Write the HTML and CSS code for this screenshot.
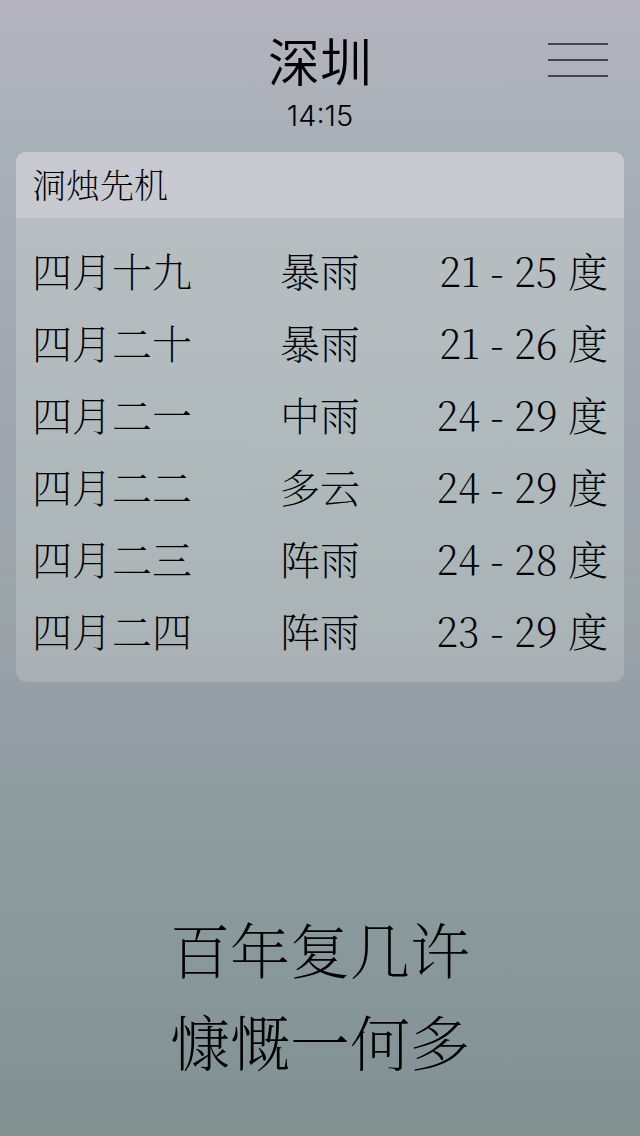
FILE: index.html
```html
<!DOCTYPE html>
<html lang="zh-CN">
<head>
<meta charset="utf-8">
<meta name="viewport" content="width=device-width, initial-scale=1">
<title>深圳</title>
<link rel="stylesheet" href="styles.css">
</head>
<body>
<header class="header">
  <div class="place">
    <h1 class="city">深圳</h1>
    <time class="time">14:15</time>
  </div>
  <button class="menu" type="button" aria-label="菜单">
    <svg class="menu-icon" viewBox="0 0 60 36" aria-hidden="true"><path d="M0 2H60M0 18H60M0 34H60"/></svg>
  </button>
</header>
<main class="main">
  <section class="card">
    <h2 class="card-title">洞烛先机</h2>
    <table class="forecast">
      <tbody>
        <tr><td>四月十九</td><td>暴雨</td><td>21 - 25 度</td></tr>
        <tr><td>四月二十</td><td>暴雨</td><td>21 - 26 度</td></tr>
        <tr><td>四月二一</td><td>中雨</td><td>24 - 29 度</td></tr>
        <tr><td>四月二二</td><td>多云</td><td>24 - 29 度</td></tr>
        <tr><td>四月二三</td><td>阵雨</td><td>24 - 28 度</td></tr>
        <tr><td>四月二四</td><td>阵雨</td><td>23 - 29 度</td></tr>
      </tbody>
    </table>
  </section>
</main>
<footer class="poem">
  <p>百年复几许</p>
  <p>慷慨一何多</p>
</footer>
</body>
</html>
```
FILE: styles.css
```css
* { box-sizing: border-box; }

body {
  margin: 0;
  min-height: 100vh;
  display: flex;
  flex-direction: column;
  padding: 24px 16px 50px;
  color: #000;
  font-family: "Noto Serif CJK SC", "Noto Sans CJK SC", sans-serif;
  font-weight: 200;
  background: linear-gradient(#b5b3c0 0%, #adb1ba 8%, #a8b0b7 13%, #a4abb4 25%, #9ea5ae 38%, #9ba4a9 52%, #959da5 65%, #8f9da1 69%, #8c9b9b 76%, #88979b 86%, #849395 94%, #829291 100%);
}

.header {
  display: grid;
  grid-template-columns: 1fr auto 1fr;
  align-items: start;
  padding-bottom: 16px;
}

.place {
  grid-column: 2;
  text-align: center;
}

.city {
  margin: 0;
  font: 350 52px/72px "Noto Sans CJK SC", sans-serif;
}

.time {
  display: block;
  font: 300 29px/40px Inter, Roboto, sans-serif;
}

.menu {
  justify-self: end;
  margin: 18px 16px 0 0;
  padding: 0;
  border: 0;
  background: none;
}

.menu-icon {
  display: block;
  width: 60px;
  height: 36px;
  fill: none;
  stroke: #45454d;
  stroke-width: 2;
}

.card {
  border-radius: 10px;
  overflow: hidden;
  background: linear-gradient(#b6bec1 15%, #b1babd 50%, #abb5b7 85%, #a9b0b5 100%);
}

.card-title {
  margin: 0;
  padding: 0 16px 2px;
  font-size: 34px;
  line-height: 64px;
  font-weight: 200;
  background: linear-gradient(#c9c9d1, #c7cacf);
}

.forecast {
  width: 100%;
  margin: 16px 0;
  border-collapse: collapse;
  table-layout: fixed;
  font-size: 40px;
  line-height: 72px;
  font-variant-numeric: tabular-nums;
}

.forecast td {
  padding: 0;
  white-space: nowrap;
}

.forecast td:first-child { padding-left: 16px; }
.forecast td:nth-child(2) { text-align: center; }
.forecast td:last-child { padding-right: 16px; text-align: right; }

.poem {
  margin-top: auto;
  text-align: center;
  font-size: 60px;
  line-height: 92px;
}

.poem p { margin: 0; }
```
